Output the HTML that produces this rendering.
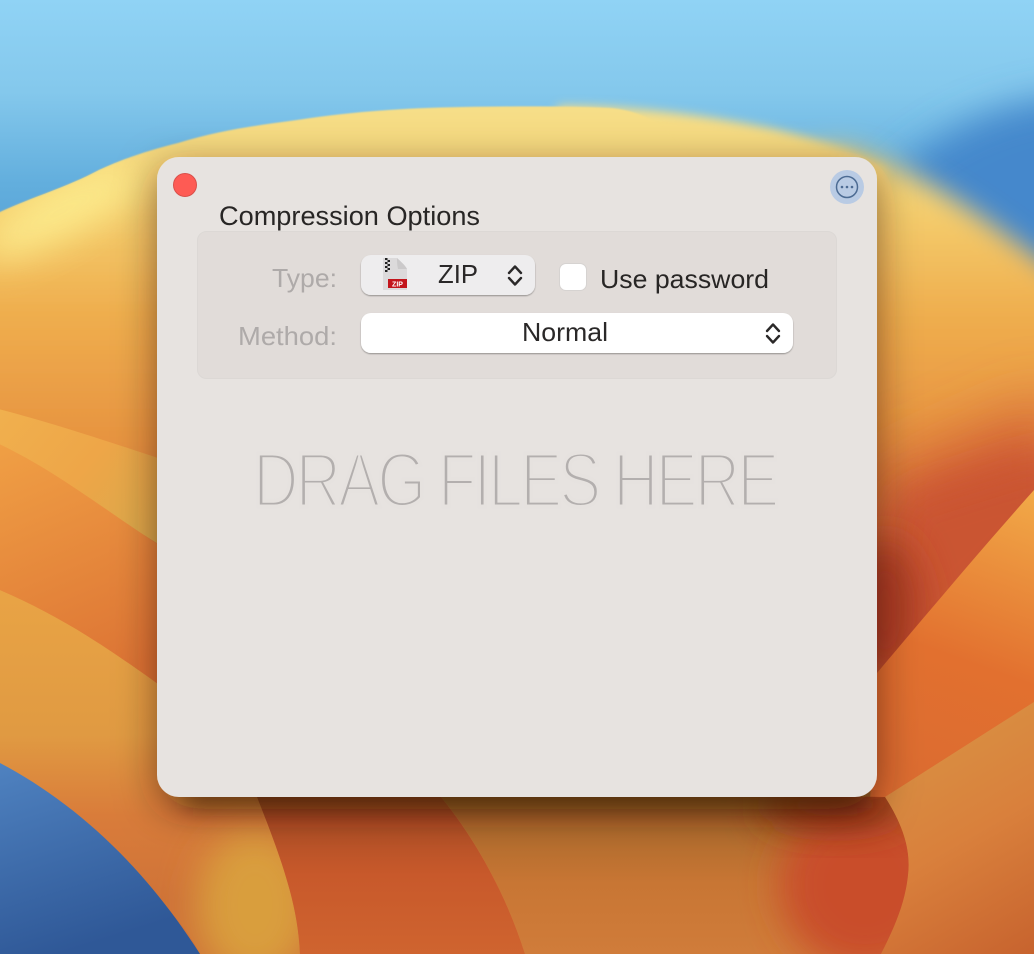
<!DOCTYPE html>
<html><head><meta charset="utf-8">
<style>html,body{margin:0;padding:0;width:1034px;height:954px;overflow:hidden;background:#e09040}svg{display:block}text{font-family:"Liberation Sans",sans-serif}</style>
</head><body>
<svg width="1034" height="954" viewBox="0 0 1034 954" xmlns="http://www.w3.org/2000/svg">
<defs>
<linearGradient id="sky" x1="0" y1="0" x2="0" y2="230" gradientUnits="userSpaceOnUse"><stop offset="0" stop-color="#90d3f5"/><stop offset=".4" stop-color="#84c8ec"/><stop offset=".8" stop-color="#62aedd"/><stop offset="1" stop-color="#5aa5d8"/></linearGradient>
<linearGradient id="sun" x1="0" y1="110" x2="0" y2="560" gradientUnits="userSpaceOnUse"><stop offset="0" stop-color="#f6de88"/><stop offset=".2" stop-color="#f5d070"/><stop offset=".45" stop-color="#efae4e"/><stop offset=".75" stop-color="#e6923f"/><stop offset="1" stop-color="#d97f3a"/></linearGradient>
<linearGradient id="band" x1="0" y1="410" x2="157" y2="540" gradientUnits="userSpaceOnUse"><stop offset="0" stop-color="#f0b04e"/><stop offset=".5" stop-color="#eea648"/><stop offset="1" stop-color="#d9a84a"/></linearGradient>
<linearGradient id="l2" x1="0" y1="440" x2="100" y2="680" gradientUnits="userSpaceOnUse"><stop offset="0" stop-color="#f0a045"/><stop offset="1" stop-color="#dd7434"/></linearGradient>
<linearGradient id="l3" x1="0" y1="600" x2="0" y2="900" gradientUnits="userSpaceOnUse"><stop offset="0" stop-color="#e8a345"/><stop offset=".45" stop-color="#e09a42"/><stop offset=".72" stop-color="#d97c3a"/><stop offset="1" stop-color="#cf7338"/></linearGradient>
<linearGradient id="blue" x1="0" y1="763" x2="60" y2="954" gradientUnits="userSpaceOnUse"><stop offset="0" stop-color="#4f82c0"/><stop offset="1" stop-color="#2f5897"/></linearGradient>
<linearGradient id="r2" x1="1034" y1="490" x2="930" y2="780" gradientUnits="userSpaceOnUse"><stop offset="0" stop-color="#f2aa48"/><stop offset=".6" stop-color="#e2702f"/><stop offset="1" stop-color="#dc6c30"/></linearGradient>
<linearGradient id="r3" x1="900" y1="720" x2="1034" y2="954" gradientUnits="userSpaceOnUse"><stop offset="0" stop-color="#d99344"/><stop offset=".5" stop-color="#d9803c"/><stop offset="1" stop-color="#c7632e"/></linearGradient>
<linearGradient id="m1" x1="0" y1="797" x2="0" y2="954" gradientUnits="userSpaceOnUse"><stop offset="0" stop-color="#a34a22"/><stop offset=".5" stop-color="#c8592b"/><stop offset="1" stop-color="#cf642f"/></linearGradient>
<linearGradient id="m2" x1="0" y1="797" x2="0" y2="954" gradientUnits="userSpaceOnUse"><stop offset="0" stop-color="#a06428"/><stop offset=".55" stop-color="#c87634"/><stop offset="1" stop-color="#d07c3a"/></linearGradient>
<filter id="b1" x="-5%" y="-5%" width="110%" height="110%"><feGaussianBlur stdDeviation=".8"/></filter>
<filter id="b6" x="-10%" y="-10%" width="120%" height="120%"><feGaussianBlur stdDeviation="5"/></filter>
<filter id="b14" x="-10%" y="-10%" width="120%" height="120%"><feGaussianBlur stdDeviation="13"/></filter>
<filter id="b40" x="-80%" y="-80%" width="260%" height="260%"><feGaussianBlur stdDeviation="32"/></filter>
<filter id="b20" x="-60%" y="-60%" width="220%" height="220%"><feGaussianBlur stdDeviation="18"/></filter>
<filter id="b12" x="-20%" y="-300%" width="140%" height="700%"><feGaussianBlur stdDeviation="12"/></filter>
<filter id="win" x="-15%" y="-15%" width="130%" height="130%"><feDropShadow dx="0" dy="12" stdDeviation="20" flood-color="#2a1005" flood-opacity=".5"/></filter>
<filter id="pop" x="-10%" y="-20%" width="120%" height="150%"><feDropShadow dx="0" dy="1" stdDeviation=".8" flood-color="#000" flood-opacity=".35"/></filter>
<clipPath id="clipR"><path d="M885 797C903 825 911 850 908 875C905 905 893 930 881 954L525 954C505 890 470 830 435 790Z"/></clipPath>
<clipPath id="clipSun"><path d="M0 212C35 196 65 188 99 170C125 158 150 150 178 143L178 500L0 500Z"/></clipPath>
<clipPath id="clipG"><path d="M120 790L257 797C282 860 298 905 300 954L200 954C180 915 150 890 120 860Z"/></clipPath>
<clipPath id="clipLower"><path d="M120 790H885C903 825 911 850 908 875L908 954H120Z"/></clipPath>
</defs>

<rect width="1034" height="954" fill="url(#sky)"/>
<path d="M1080 95C1010 100 930 125 860 210L1080 340Z" fill="#4488cc" filter="url(#b20)"/>

<!-- sun: very soft on far right, soft middle, crisp left -->
<path filter="url(#b14)" d="M500 240C640 190 760 155 840 146C900 160 975 205 1090 300L1090 1000L500 1000Z" fill="url(#sun)"/>
<path filter="url(#b6)" d="M480 200L560 106C640 106 710 116 770 128C810 137 850 150 885 168L885 1000L480 1000Z" fill="url(#sun)"/>
<path filter="url(#b1)" d="M-10 217L0 212C35 196 65 188 99 170C125 158 150 150 178 143C220 130 260 125 297 120C350 112 400 108 462 107C520 106 570 106 610 108C640 111 665 122 690 155L690 1000L-10 1000Z" fill="url(#sun)"/>
<g clip-path="url(#clipSun)"><ellipse cx="60" cy="212" rx="90" ry="26" transform="rotate(-28 60 212)" fill="#fdee90" opacity=".85" filter="url(#b20)"/></g>

<!-- right warm area -->
<path d="M880 480L1060 400L1060 540L860 720Z" fill="#cf5a36" filter="url(#b40)"/>
<path d="M900 500L1060 450L1060 530L880 700Z" fill="#ca5430" filter="url(#b20)"/>
<ellipse cx="885" cy="610" rx="36" ry="70" fill="#a83b20" filter="url(#b20)"/>

<!-- left layers -->
<path d="M-5 408C60 425 110 442 200 472L200 570L-5 442Z" fill="url(#band)"/>
<path d="M-5 442C60 472 110 515 200 572L200 720L-5 598Z" fill="url(#l2)"/>
<path d="M-5 588C70 620 120 655 220 730L330 954L-5 954Z" fill="url(#l3)"/>
<g clip-path="url(#clipG)"><ellipse cx="255" cy="905" rx="58" ry="75" fill="#d99e3e" filter="url(#b20)"/></g>
<path d="M0 763C70 800 140 860 200 954L0 954Z" fill="url(#blue)"/>

<!-- bottom -->
<path d="M257 797C282 860 298 905 300 954L525 954C505 890 470 830 435 790Z" fill="url(#m1)"/>
<path d="M435 790C470 830 505 890 525 954L881 954C893 930 905 905 908 875C911 850 903 825 885 797L880 790Z" fill="url(#m2)"/>

<!-- right layers -->
<path d="M877 673C930 610 985 545 1034 490L1034 702L885 797L870 800Z" fill="url(#r2)"/>
<path d="M1034 702L885 797C903 825 911 850 908 875C905 905 893 930 881 954L1034 954Z" fill="url(#r3)"/>
<g clip-path="url(#clipR)"><ellipse cx="865" cy="885" rx="85" ry="85" fill="#c94e2a" filter="url(#b20)"/><ellipse cx="835" cy="805" rx="75" ry="24" fill="#923619" filter="url(#b20)"/></g>
<g clip-path="url(#clipLower)"><rect x="185" y="782" width="680" height="26" fill="#3a1505" opacity=".5" filter="url(#b12)"/></g>

<!-- window -->
<rect x="157" y="157" width="720" height="640" rx="22" fill="#e7e3e0" filter="url(#win)"/>
<rect x="197.500" y="231.500" width="639" height="147" rx="9" fill="#e1dcd9" stroke="#dcd8d5"/>

<circle cx="185" cy="185" r="11.500" fill="#fe5b54" stroke="#d9504a" stroke-width="1"/>
<circle cx="847" cy="187" r="17" fill="#b9cbe4"/>
<circle cx="847" cy="187" r="10.500" fill="none" stroke="#4c6b93" stroke-width="1.500"/>
<circle cx="842" cy="187" r="1.300" fill="#4c6b93"/><circle cx="847" cy="187" r="1.300" fill="#4c6b93"/><circle cx="852" cy="187" r="1.300" fill="#4c6b93"/>

<text x="219" y="225" font-size="26.500" fill="#282625" textLength="261" lengthAdjust="spacingAndGlyphs">Compression Options</text>
<text x="272" y="287" font-size="26" fill="#aeaaa9" textLength="65" lengthAdjust="spacingAndGlyphs">Type:</text>
<text x="238" y="345" font-size="26" fill="#aeaaa9" textLength="99" lengthAdjust="spacingAndGlyphs">Method:</text>

<rect x="361" y="255" width="174" height="40" rx="10" fill="#eeedee" filter="url(#pop)"/>
<text x="438" y="283" font-size="26" fill="#2a2828" textLength="40" lengthAdjust="spacingAndGlyphs">ZIP</text>
<path d="M509 273L515 266.500L521 273M509 278L515 284.500L521 278" fill="none" stroke="#2a2828" stroke-width="2.400" stroke-linecap="round" stroke-linejoin="round"/>

<!-- zip icon -->
<path d="M383 258H397C400 261 405 265 407 269V290H383Z" fill="#dcdadb"/>
<path d="M397 258C400 261 405 265 407 269H398C397 265 397 261 397 258Z" fill="#cbc9ca"/>
<g fill="#222"><rect x="385" y="258" width="2.500" height="2"/><rect x="387.500" y="260" width="2.500" height="2"/><rect x="385" y="262" width="2.500" height="2"/><rect x="387.500" y="264" width="2.500" height="2"/><rect x="385" y="266" width="2.500" height="2"/><rect x="387.500" y="268" width="2.500" height="2"/><rect x="385" y="270" width="2.500" height="2"/></g>
<rect x="388" y="279" width="19" height="9" fill="#c3151c"/>
<text x="397.500" y="286.500" font-size="7" font-weight="700" fill="#fff" text-anchor="middle">ZIP</text>

<rect x="559.500" y="263.500" width="27" height="27" rx="6.500" fill="#fff" stroke="#d6d3d1"/>
<text x="600" y="288" font-size="26" fill="#282625" textLength="169" lengthAdjust="spacingAndGlyphs">Use password</text>

<rect x="361" y="313" width="432" height="40" rx="10" fill="#fff" filter="url(#pop)"/>
<text x="522" y="341" font-size="26" fill="#2a2828" textLength="86" lengthAdjust="spacingAndGlyphs">Normal</text>
<path d="M767 331L773 324.500L779 331M767 336L773 342.500L779 336" fill="none" stroke="#2a2828" stroke-width="2.400" stroke-linecap="round" stroke-linejoin="round"/>

<g transform="translate(255 505) scale(.82 1)">
<text x="-2.500" y="1.500" font-size="77" letter-spacing="-3.650" fill="#b3afae" stroke="#e6e2df" stroke-width="4">DRAG FILES HERE</text>
</g>
</svg>
</body></html>
